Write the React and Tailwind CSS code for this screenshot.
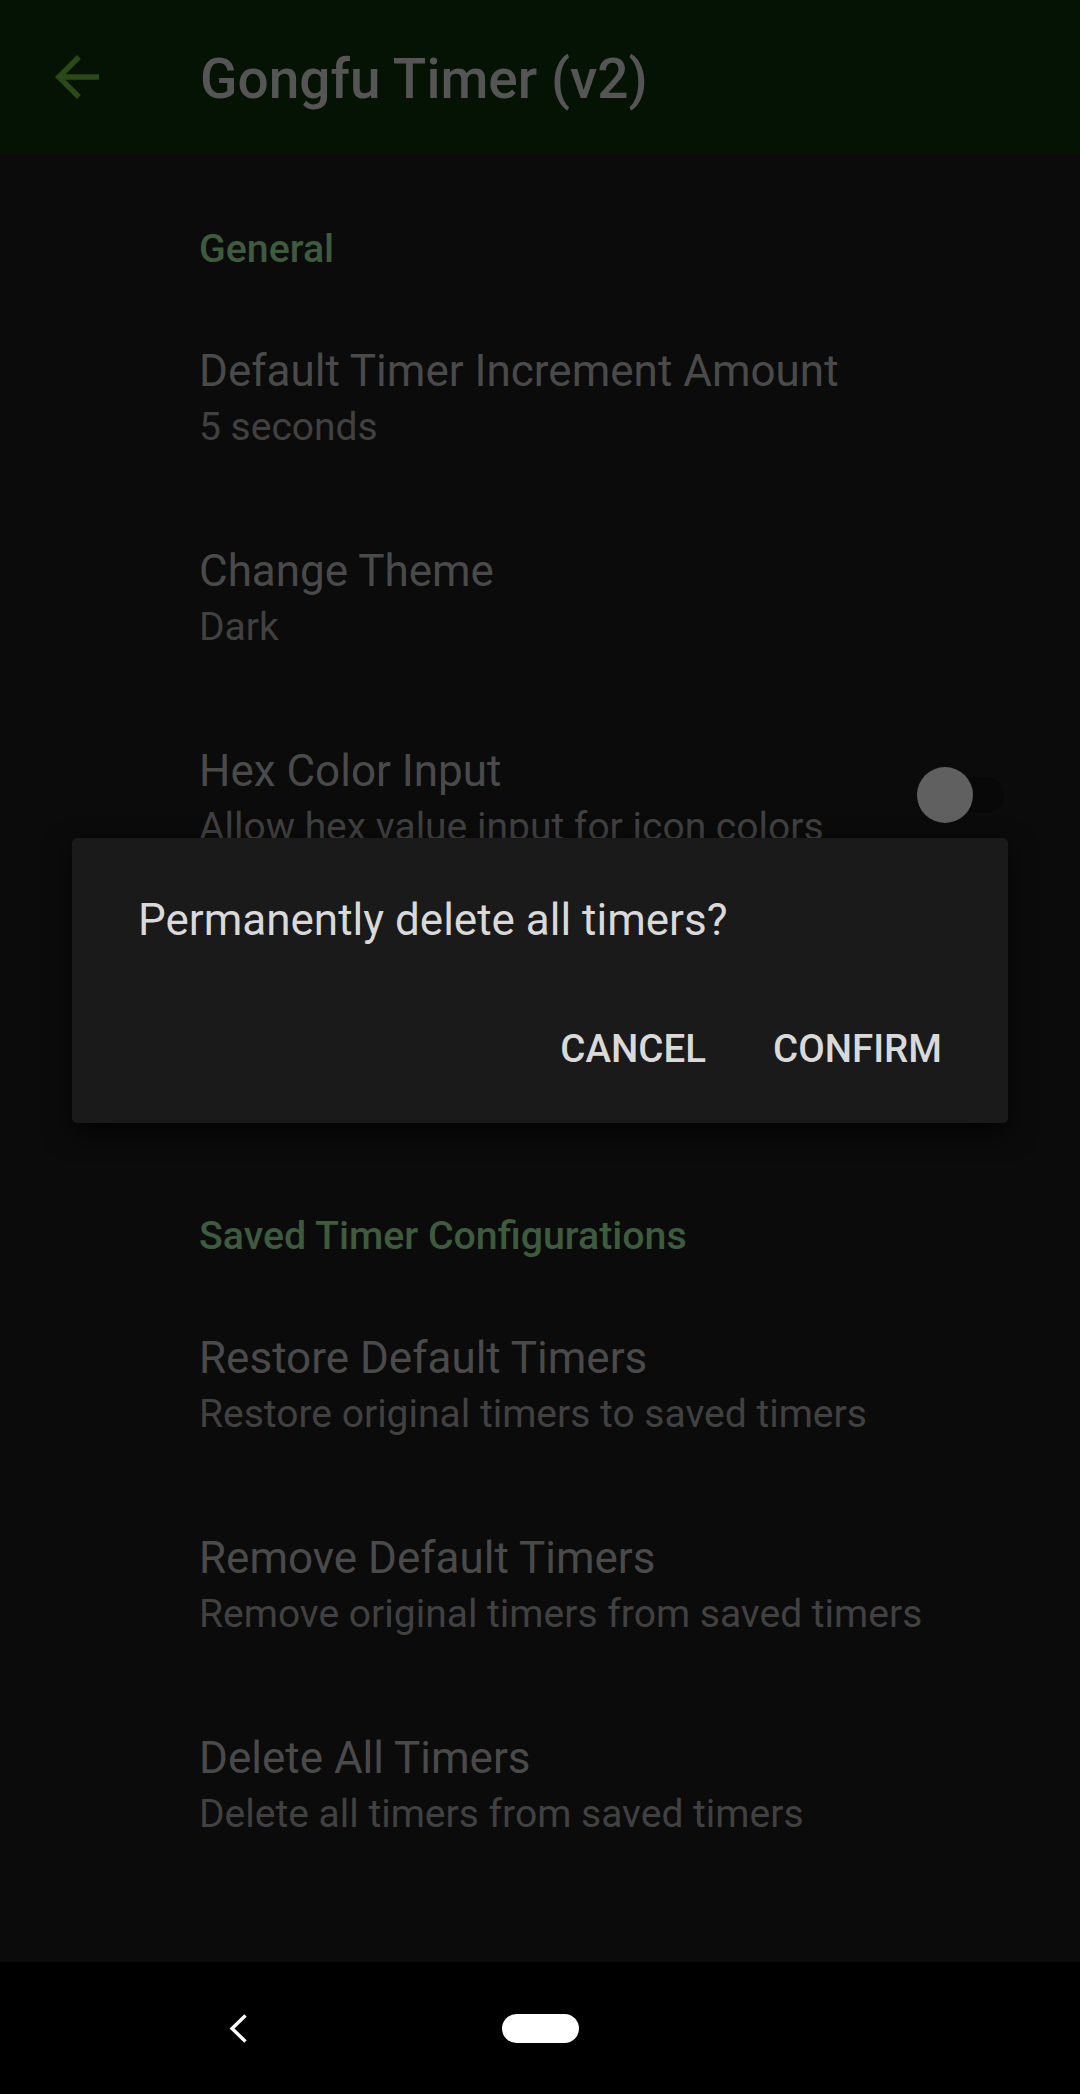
import React from 'react';

// Settings screen with a confirm dialog laid over it (scrim is baked into the dimmed colours)

const font = { fontFamily: 'Roboto, "Noto Sans", sans-serif' };

const Category = ({ label, top }) => (
  <div className={`${top} pb-[33px]`}>
    <div className="text-[39.3px] leading-[46px] font-medium text-[#3e5b3e]">{label}</div>
  </div>
);

const Item = ({ title, summary, right }) => (
  <div className="flex items-center h-[200px] pt-[40px] pb-[52px] pr-[76px]">
    <div className="flex-1 min-w-0">
      <div className="text-[44px] leading-[52px] text-[#4a4a4a] whitespace-nowrap">{title}</div>
      <div className="mt-[4px] text-[39px] leading-[52px] text-[#414141] whitespace-nowrap">{summary}</div>
    </div>
    {right}
  </div>
);

const Switch = () => (
  <div className="relative w-[87px] h-[56px] mb-[8px] flex items-center">
    <div className="absolute left-[2px] right-0 h-[36px] rounded-full bg-[#080808]"></div>
    <div className="relative w-[56px] h-[56px] rounded-full bg-[#606060]"></div>
  </div>
);

export default function App() {
  return (
    <div className="relative w-[1080px] h-[2094px] flex flex-col bg-[#0b0b0b] overflow-hidden" style={font}>
      {/* App bar */}
      <div className="h-[154px] shrink-0 flex items-center bg-[#041304]">
        <svg className="ml-[44px] w-[66px] h-[66px]" viewBox="0 0 24 24" fill="#2a4a15">
          <path d="M20 11H7.83l5.59-5.59L12 4l-8 8 8 8 1.41-1.41L7.83 13H20v-2z" />
        </svg>
        <div className="ml-[90px] mt-[4px] text-[55px] leading-[64px] font-medium text-[#555555]">Gongfu Timer (v2)</div>
      </div>

      {/* Preference list */}
      <div className="flex-1 pl-[199px]">
        <Category label="General" top="pt-[72px]" />
        <Item title="Default Timer Increment Amount" summary="5 seconds" />
        <Item title="Change Theme" summary="Dark" />
        <Item title="Hex Color Input" summary="Allow hex value input for icon colors" right={<Switch />} />
        <Category label="Saved Timer Configurations" top="pt-[308px]" />
        <Item title="Restore Default Timers" summary="Restore original timers to saved timers" />
        <Item title="Remove Default Timers" summary="Remove original timers from saved timers" />
        <Item title="Delete All Timers" summary="Delete all timers from saved timers" />
      </div>

      {/* System nav bar */}
      <div className="h-[132px] shrink-0 flex items-center bg-black">
        <svg className="ml-[229px] w-[19px] h-[29px]" viewBox="0 0 19 29" fill="none">
          <polyline points="16.5,1.5 3,14.5 16.5,27.5" stroke="#ffffff" strokeWidth="3.4" />
        </svg>
        <div className="ml-[254px] w-[77px] h-[29px] rounded-full bg-white"></div>
      </div>

      {/* Dialog */}
      <div className="absolute left-[72px] top-[838px] w-[936px] h-[285px] rounded-[5px] bg-[#1a1a1a] shadow-[0_10px_28px_rgba(0,0,0,0.7)] flex flex-col">
        <div className="pt-[56px] pl-[66px] text-[44px] leading-[52px] text-[#d9d9d9]">Permanently delete all timers?</div>
        <div className="mt-auto pb-[51px] pr-[66px] flex justify-end gap-[67px] text-[38.5px] leading-[46px] font-medium text-[#d9d9d9]">
          <span>CANCEL</span>
          <span>CONFIRM</span>
        </div>
      </div>
    </div>
  );
}
